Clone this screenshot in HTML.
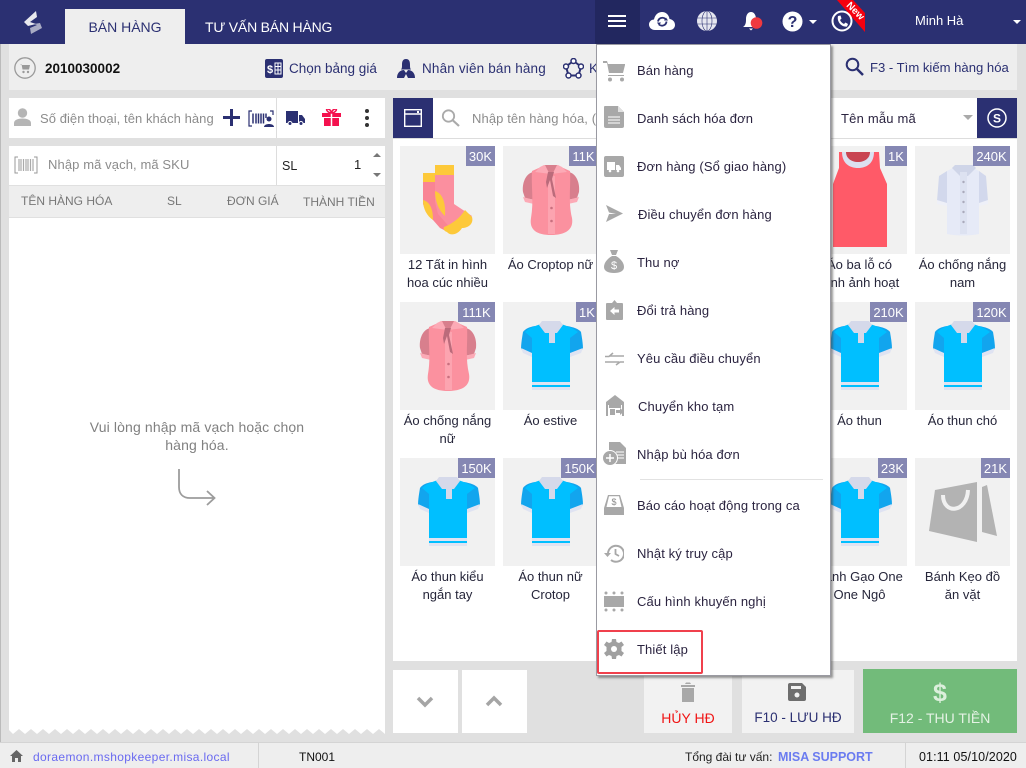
<!DOCTYPE html>
<html lang="vi"><head><meta charset="utf-8"><title>Bán hàng</title>
<style>
html,body{margin:0;padding:0;width:1026px;height:768px;overflow:hidden;background:#e0e0e0;font-family:"Liberation Sans","Noto Sans CJK SC",sans-serif;font-size:13px}
div,span,svg{position:absolute}
.t{white-space:nowrap;line-height:18px}
.w{background:#fff}
.cell{width:95px;height:108px;background:#f1f1f1;overflow:hidden}
.cell svg{left:0;top:0}
.b{top:0;right:0;height:20px;line-height:21px;background:#8587b3;color:#fff;font-size:13px;text-align:center}
.n{width:103px;text-align:center;color:#26263a;line-height:18px;font-size:13px}
.mi{left:637px;color:#2b2440;line-height:18px;white-space:nowrap;font-size:13px;letter-spacing:.12px;margin-top:1px}
.nv{color:#2b3072;font-weight:400}
.hd{color:#777;font-size:12px;top:193px;line-height:16px;white-space:nowrap}
</style></head><body>
<svg width="0" height="0" style="left:0;top:0">
<defs>
<g id="polo">
<path d="M32 24C26 25 22 27 20 30 19 36 18 42 18 47L29 52z" fill="#12a5ee"/><path d="M64 24C70 25 76 27 78 30 79 36 80 42 80 47L67 52z" fill="#12a5ee"/>
<path d="M18 46L29 51V55L20 51z" fill="#dfe3f2"/><path d="M80 46L67 51V55L78 51z" fill="#dfe3f2"/>
<rect x="29" y="27" width="38" height="58" fill="#00bfff"/><path d="M22 30C26 26 32 24 38 22H58C64 24 70 26 75 30L67 36H29z" fill="#00bfff"/>
<rect x="29" y="80" width="38" height="3" fill="#dfe3f2"/><rect x="29" y="85" width="38" height="3" fill="#dfe3f2"/>
<path d="M36 23L39 19H57L60 23 54 31H52V41H46V31H42z" fill="#d5d9ea"/>
</g>
<g id="blouse">
<path d="M30 26C22 28 19 38 20 46L22 52 32 54zM66 26C74 28 77 38 76 46L74 52 64 54z" fill="#d87f8d"/>
<path d="M20 51L31 54V58L22 56zM76 51L65 54V58L74 56z" fill="#fcaab6"/>
<path d="M29 25L38 21H58L67 25C68 40 65 55 69 72 71 84 62 89 48 89 34 89 26 84 28 72 31 55 28 40 29 25z" fill="#fb919f"/>
<rect x="45" y="30" width="7" height="58" fill="#fca4b0"/>
<path d="M37 21L41 19H55L59 21 64 26 48 28 32 26z" fill="#fcaab6"/>
<path d="M42 19H54L50 27H46z" fill="#d87f8d"/><path d="M45 26H51L49 33 53 52 50 50 47 34 44 42 43 36z" fill="#bb6b7b"/>
<circle cx="48.500" cy="62" r="1.300" fill="#c9707f"/><circle cx="48.500" cy="75" r="1.300" fill="#c9707f"/>
</g>
</defs></svg>

<!-- header -->
<div style="left:0;top:0;width:1026px;height:44px;background:#2b3072"></div>
<div style="left:0;top:44px;width:1px;height:724px;background:#bbb"></div>
<svg style="left:22px;top:9px" width="22" height="25" viewBox="0 0 22 25"><path d="M3 12L12 15 18 14 20 19 9 25 8 19 15 16z" fill="#a9abc4"/><path d="M2 13L14 2 15 8 8 13 14 15 6 17z" fill="#e8e8ee"/></svg>
<div style="left:65px;top:9px;width:120px;height:35px;background:#eee;color:#2b3072;text-align:center;line-height:37px;font-size:14px">BÁN HÀNG</div>
<div class="t" style="left:205px;top:18px;color:#fff;font-size:14px;letter-spacing:-.2px">TƯ VẤN BÁN HÀNG</div>
<div style="left:595px;top:0;width:45px;height:44px;background:#22275f"></div>
<div style="left:608px;top:15px;width:18px;height:2px;background:#fff"></div>
<div style="left:608px;top:20px;width:18px;height:2px;background:#fff"></div>
<div style="left:608px;top:25px;width:18px;height:2px;background:#fff"></div>
<svg style="left:649px;top:11px" width="26" height="20" viewBox="0 0 26 20"><path d="M6 19C2 19 0 16 0 13.500 0 10.500 2.500 8.500 5 8.500 6 3.500 9.500 1 13 1 17 1 20 4 20.500 8 24 8.500 26 11 26 14 26 17 23.500 19 21 19z" fill="#fff"/><path d="M9 10.500a4.500 4.500 0 0 1 7.500-2.500M17.500 10.500a4.500 4.500 0 0 1-7.500 3" fill="none" stroke="#2b3072" stroke-width="1.800"/><path d="M15 9.500h4l-2-3zM8 11.500h4l-2 3z" fill="#2b3072"/></svg>
<svg style="left:697px;top:11px" width="20" height="20" viewBox="0 0 20 20"><circle cx="10" cy="10" r="10" fill="#e6e7f0"/><path d="M0 7H20M0 13H20M10 0V20" stroke="#2b3072" stroke-width=".6"/><ellipse cx="10" cy="10" rx="5" ry="10" fill="none" stroke="#2b3072" stroke-width=".6"/></svg>
<svg style="left:743px;top:10px" width="22" height="22" viewBox="0 0 22 22"><path d="M0 17C3 15 3 12 3 9 3 5 5 2 8 2 11 2 13 5 13 9 13 12 15 15 16 17z" fill="#fff"/><path d="M6 18.500H10L8 20.500z" fill="#fff"/><circle cx="13.500" cy="13" r="5.800" fill="#f0393f"/></svg>
<svg style="left:782px;top:11px" width="21" height="21" viewBox="0 0 21 21"><circle cx="10.500" cy="10.500" r="10" fill="#fff"/><text x="10.500" y="16" text-anchor="middle" font-family="Liberation Sans" font-weight="700" font-size="16" fill="#2b3072">?</text></svg>
<div style="left:809px;top:20px;border:4px solid transparent;border-top-color:#fff;border-bottom:0"></div>
<svg style="left:837px;top:0" width="30" height="33" viewBox="0 0 30 33"><path d="M0 0H16L28 13V32z" fill="#f5000f"/><text text-anchor="middle" transform="translate(16.200 13.200) rotate(45)" font-family="Liberation Sans" font-weight="700" font-size="10" fill="#fff">New</text></svg>
<svg style="left:831px;top:10px" width="22" height="22" viewBox="0 0 22 22"><circle cx="11" cy="11" r="9.500" fill="none" stroke="#fff" stroke-width="2"/><path d="M7 6L9.500 5.500 10.500 8.500 9 10C10 12 11 13 13 14L14.500 12.500 17 14 16 16.500C11 17.500 5.500 12 7 6z" fill="#fff"/></svg>
<div class="t" style="left:915px;top:12px;color:#fff;font-size:13px">Minh Hà</div>
<div style="left:1013px;top:20px;border:4px solid transparent;border-top-color:#fff;border-bottom:0"></div>

<!-- toolbar -->
<div style="left:9px;top:44px;width:1008px;height:46px;background:#eee"></div>
<svg style="left:14px;top:57px" width="22" height="22" viewBox="0 0 22 22"><circle cx="11" cy="11" r="10.200" fill="none" stroke="#9a9a9a" stroke-width="1.300"/><path d="M6 7H7.500L8.500 12.500H15L16 8H8" fill="#9a9a9a"/><circle cx="9.500" cy="15" r="1.200" fill="#9a9a9a"/><circle cx="14" cy="15" r="1.200" fill="#9a9a9a"/></svg>
<div class="t" style="left:45px;top:60px;font-weight:700;color:#111;font-size:13.500px">2010030002</div>
<svg style="left:265px;top:59px" width="18" height="19" viewBox="0 0 18 19"><rect width="18" height="19" rx="2" fill="#2b3072"/><text x="2" y="14" font-family="Liberation Sans" font-weight="700" font-size="11" fill="#fff">$</text><path d="M10 4H16V15H10zM10 7.500H16M10 11H16M13 4V15" stroke="#fff" fill="none"/></svg>
<div class="t nv" style="left:289px;top:60px;font-size:13.500px">Chọn bảng giá</div>
<svg style="left:397px;top:58px" width="18" height="20" viewBox="0 0 18 20"><path d="M9 1C5.500 1 5 4 5 7 5 9 5 10.500 4 11.500H14C13 10.500 13 9 13 7 13 4 12.500 1 9 1z" fill="#2b3072"/><path d="M0 20C0 14 4 12 7 12L9 15 11 12C14 12 18 14 18 20H11L9 16 7 20z" fill="#2b3072"/></svg>
<div class="t nv" style="left:422px;top:60px;font-size:13.500px;letter-spacing:.17px">Nhân viên bán hàng</div>
<svg style="left:563px;top:58px" width="21" height="21" viewBox="0 0 21 21"><path d="M10.500 3L18 8.500 15.500 17.500H5.500L3 8.500z" fill="none" stroke="#2b3072" stroke-width="2"/><circle cx="10.500" cy="3" r="2.500" fill="#fff" stroke="#2b3072" stroke-width="1.500"/><circle cx="18" cy="8.500" r="2.500" fill="#fff" stroke="#2b3072" stroke-width="1.500"/><circle cx="3" cy="8.500" r="2.500" fill="#fff" stroke="#2b3072" stroke-width="1.500"/><circle cx="15.500" cy="17.500" r="2.500" fill="#fff" stroke="#2b3072" stroke-width="1.500"/><circle cx="5.500" cy="17.500" r="2.500" fill="#fff" stroke="#2b3072" stroke-width="1.500"/></svg>
<div class="t nv" style="left:589px;top:60px;font-size:13.500px">K</div>
<svg style="left:845px;top:57px" width="19" height="19" viewBox="0 0 19 19"><circle cx="7.500" cy="7.500" r="5.800" fill="none" stroke="#2b3072" stroke-width="2"/><path d="M12 12L18 18" stroke="#2b3072" stroke-width="2.500"/></svg>
<div class="t nv" style="left:870px;top:59px;font-size:13.100px">F3 - Tìm kiếm hàng hóa</div>

<!-- left column -->
<div class="w" style="left:9px;top:98px;width:376px;height:40px"></div>
<svg style="left:14px;top:108px" width="17" height="18" viewBox="0 0 17 18"><circle cx="8.500" cy="5" r="4.700" fill="#b5b5b5"/><path d="M0 18V15C0 12 4 10.500 8.500 10.500 13 10.500 17 12 17 15V18z" fill="#b5b5b5"/></svg>
<div class="t" style="left:40px;top:110px;color:#8c8c8c;font-size:13px;letter-spacing:.06px">Số điện thoại, tên khách hàng</div>
<div style="left:223px;top:116px;width:17px;height:3px;background:#2b3072"></div>
<div style="left:230px;top:109px;width:3px;height:17px;background:#2b3072"></div>
<svg style="left:248px;top:110px" width="26" height="17" viewBox="0 0 26 17"><path d="M4 1H1V16H4M22 1H25V5" fill="none" stroke="#2b3072" stroke-width="1.200"/><path d="M5 3.500V13.500M8 3.500V13.500M10.500 3.500V13.500M13 3.500V13.500M15.500 3.500V13.500M18 3.500V8" stroke="#2b3072" stroke-width="1.500"/><circle cx="21" cy="9" r="2.500" fill="#2b3072"/><path d="M16 17C16 13 26 13 26 17z" fill="#2b3072"/></svg>
<div style="left:276px;top:98px;width:1px;height:40px;background:#ddd"></div>
<svg style="left:286px;top:111px" width="19" height="15" viewBox="0 0 19 15"><path d="M0 0H12V12H0zM13 4H16L19 8V12H13z" fill="#2b3072"/><circle cx="4" cy="12.500" r="2" fill="#2b3072" stroke="#fff"/><circle cx="15" cy="12.500" r="2" fill="#2b3072" stroke="#fff"/></svg>
<svg style="left:322px;top:109px" width="19" height="17" viewBox="0 0 19 17"><path d="M0 4H19V8H0zM2 9H17V17H2z" fill="#f4114e"/><path d="M9.500 3V17" stroke="#fff" stroke-width="1.500"/><path d="M9.500 4C6 4 3 0 5.500 0S9 2 9.500 4C10 2 11 0 13.500 0S13 4 9.500 4z" fill="none" stroke="#f4114e" stroke-width="1.500"/></svg>
<div style="left:365px;top:109px;width:4px;height:4px;border-radius:50%;background:#333"></div>
<div style="left:365px;top:116px;width:4px;height:4px;border-radius:50%;background:#333"></div>
<div style="left:365px;top:123px;width:4px;height:4px;border-radius:50%;background:#333"></div>

<div class="w" style="left:9px;top:146px;width:376px;height:39px"></div>
<svg style="left:14px;top:156px" width="24" height="18" viewBox="0 0 24 18"><path d="M4 1H1V17H4M20 1H23V17H20" fill="none" stroke="#999" stroke-width="1"/><path d="M5 3V15M7 3V15M9.500 3V15M12 3V15M14 3V15M16.500 3V15M19 3V15" stroke="#aaa" stroke-width="1.200"/></svg>
<div class="t" style="left:48px;top:156px;color:#8c8c8c;font-size:13px;letter-spacing:.1px">Nhập mã vạch, mã SKU</div>
<div style="left:276px;top:146px;width:1px;height:39px;background:#ddd"></div>
<div class="t" style="left:282px;top:157px;color:#222;font-size:12.500px">SL</div>
<div class="t" style="left:354px;top:156px;color:#222;font-size:13px">1</div>
<div style="left:373px;top:153px;border:4px solid transparent;border-bottom-color:#777;border-top:0"></div>
<div style="left:373px;top:173px;border:4px solid transparent;border-top-color:#777;border-bottom:0"></div>
<div style="left:9px;top:186px;width:376px;height:31px;background:#eee"></div>
<div class="hd" style="left:21px">TÊN HÀNG HÓA</div>
<div class="hd" style="left:167px">SL</div>
<div class="hd" style="left:227px">ĐƠN GIÁ</div>
<div class="hd" style="left:303px;top:194px">THÀNH TIỀN</div>
<div class="w" style="left:9px;top:218px;width:376px;height:511px"></div>
<svg style="left:9px;top:729px" width="376" height="6" viewBox="0 0 376 6"><path d="M0 0H376V5L370 0 364 5 358 0 352 5 346 0 340 5 334 0 328 5 322 0 316 5 310 0 304 5 298 0 292 5 286 0 280 5 274 0 268 5 262 0 256 5 250 0 244 5 238 0 232 5 226 0 220 5 214 0 208 5 202 0 196 5 190 0 184 5 178 0 172 5 166 0 160 5 154 0 148 5 142 0 136 5 130 0 124 5 118 0 112 5 106 0 100 5 94 0 88 5 82 0 76 5 70 0 64 5 58 0 52 5 46 0 40 5 34 0 28 5 22 0 16 5 10 0 4 5 0 1z" fill="#fff"/></svg>
<div style="left:9px;top:418px;width:376px;text-align:center;color:#808080;font-size:14px;line-height:18px;letter-spacing:.13px">Vui lòng nhập mã vạch hoặc chọn<br>hàng hóa.</div>
<svg style="left:176px;top:468px" width="42" height="40" viewBox="0 0 42 40"><path d="M3 1V19C3 26 7 30 14 30H38M31 23L38.500 30 31 37" fill="none" stroke="#9c9c9c" stroke-width="1.800"/></svg>

<!-- right column -->
<div class="w" style="left:393px;top:98px;width:624px;height:563px"></div>
<div style="left:393px;top:138px;width:624px;height:1px;background:#ddd"></div>
<div style="left:393px;top:98px;width:40px;height:40px;background:#2b3072"></div>
<svg style="left:404px;top:109px" width="18" height="18" viewBox="0 0 18 18"><rect x=".7" y=".7" width="16.600" height="16.600" fill="none" stroke="#fff" stroke-width="1.400"/><path d="M1 5H17" stroke="#fff" stroke-width="1.500"/><rect x="13" y="2" width="2" height="2" fill="#fff"/></svg>
<svg style="left:441px;top:109px" width="19" height="18" viewBox="0 0 19 18"><circle cx="7.500" cy="7" r="5.700" fill="none" stroke="#aaa" stroke-width="1.800"/><path d="M12 11.500L18 17" stroke="#aaa" stroke-width="2.200"/></svg>
<div class="t" style="left:472px;top:110px;color:#8c8c8c;font-size:13px;letter-spacing:.1px">Nhập tên hàng hóa, (</div>
<div class="t" style="left:841px;top:110px;color:#2b2440;font-size:13px;letter-spacing:.2px">Tên mẫu mã</div>
<div style="left:963px;top:115px;border:5px solid transparent;border-top-color:#aaa;border-bottom:0"></div>
<div style="left:977px;top:98px;width:40px;height:40px;background:#2b3072"></div>
<svg style="left:987px;top:108px" width="20" height="20" viewBox="0 0 20 20"><circle cx="10" cy="10" r="9" fill="none" stroke="#fff" stroke-width="1.500"/><text x="10" y="14.500" text-anchor="middle" font-family="Liberation Sans" font-weight="700" font-size="12" fill="#fff">S</text></svg>

<!-- products row 1 -->
<div class="cell" style="left:400px;top:146px"><svg width="95" height="108" viewBox="0 0 95 108">
<path d="M23 36H36V60L55 80 50 87 40 82 26 66 23 58z" fill="#f98494"/><path d="M23 27H35V36H23z" fill="#fdc93a"/><path d="M23 54C30 56 33 63 33 74 27 70 23 63 23 54z" fill="#fdc93a"/>
<path d="M35 19H54V29H35z" fill="#fdc93a"/><path d="M35 29H54V58L72 70 58 86 52 84 38 68 35 56z" fill="#fb8f9f"/>
<path d="M35 45C42 47 46 56 45 70 38 64 35 54 35 45z" fill="#fdc93a"/><path d="M65 64L72 71C74 78 68 82 62 82 58 89 50 90 47 86 44 85 43 83 44 81 52 78 60 72 65 64z" fill="#fdc93a"/></svg><div class="b" style="width:29px">30K</div></div>
<div class="n" style="left:396px;top:256px">12 Tất in hình<br>hoa cúc nhiều</div>
<div class="cell" style="left:503px;top:146px"><svg width="95" height="108" viewBox="0 0 95 108"><use href="#blouse"/></svg><div class="b" style="width:29px">11K</div></div>
<div class="n" style="left:499px;top:256px">Áo Croptop nữ</div>
<div class="cell" style="left:812px;top:146px"><svg width="95" height="108" viewBox="0 0 95 108"><path d="M27 6H67L68 22 75 38V101H21V38L27 22z" fill="#ff5a68"/><path d="M30 6H62C62 17 55 22 46 22 37 22 30 17 30 6z" fill="#dce0f0"/><path d="M34 6H58C58 12 53 16 46 16 39 16 34 12 34 6z" fill="#c94451"/></svg><div class="b" style="width:22px">1K</div></div>
<div class="n" style="left:808px;top:256px">Áo ba lỗ có<br>hình ảnh hoạt</div>
<div class="cell" style="left:915px;top:146px"><svg width="95" height="108" viewBox="0 0 95 108"><path d="M32 25L24 30 22 55 32 58zM64 25L71 30 73 55 64 58z" fill="#d2d8ec"/><path d="M22 54L32 57V60L22 58zM73 54L64 57V60L73 58z" fill="#eef0f8"/><path d="M32 25L38 22H58L64 25V88C55 90 41 90 32 88z" fill="#e6eaf7"/><path d="M37 22L40 19H58L61 22 53 30H45z" fill="#cfd5e8"/><rect x="45" y="26" width="7" height="62" fill="#dde2f1"/><circle cx="48.500" cy="36" r="1.200" fill="#aab"/><circle cx="48.500" cy="46" r="1.200" fill="#aab"/><circle cx="48.500" cy="56" r="1.200" fill="#aab"/><circle cx="48.500" cy="66" r="1.200" fill="#aab"/><circle cx="48.500" cy="76" r="1.200" fill="#aab"/></svg><div class="b" style="width:37px">240K</div></div>
<div class="n" style="left:911px;top:256px">Áo chống nắng<br>nam</div>

<!-- row 2 -->
<div class="cell" style="left:400px;top:302px"><svg width="95" height="108" viewBox="0 0 95 108"><use href="#blouse"/></svg><div class="b" style="width:37px">111K</div></div>
<div class="n" style="left:396px;top:412px">Áo chống nắng<br>nữ</div>
<div class="cell" style="left:503px;top:302px"><svg width="95" height="108" viewBox="0 0 95 108"><use href="#polo"/></svg><div class="b" style="width:22px">1K</div></div>
<div class="n" style="left:499px;top:412px">Áo estive</div>
<div class="cell" style="left:812px;top:302px"><svg width="95" height="108" viewBox="0 0 95 108"><use href="#polo"/></svg><div class="b" style="width:37px">210K</div></div>
<div class="n" style="left:808px;top:412px">Áo thun</div>
<div class="cell" style="left:915px;top:302px"><svg width="95" height="108" viewBox="0 0 95 108"><use href="#polo"/></svg><div class="b" style="width:37px">120K</div></div>
<div class="n" style="left:911px;top:412px">Áo thun chó</div>

<!-- row 3 -->
<div class="cell" style="left:400px;top:458px"><svg width="95" height="108" viewBox="0 0 95 108"><use href="#polo"/></svg><div class="b" style="width:37px">150K</div></div>
<div class="n" style="left:396px;top:568px">Áo thun kiểu<br>ngắn tay</div>
<div class="cell" style="left:503px;top:458px"><svg width="95" height="108" viewBox="0 0 95 108"><use href="#polo"/></svg><div class="b" style="width:37px">150K</div></div>
<div class="n" style="left:499px;top:568px">Áo thun nữ<br>Crotop</div>
<div class="cell" style="left:812px;top:458px"><svg width="95" height="108" viewBox="0 0 95 108"><use href="#polo"/></svg><div class="b" style="width:29px">23K</div></div>
<div class="n" style="left:808px;top:568px">Bánh Gạo One<br>One Ngô</div>
<div class="cell" style="left:915px;top:458px"><svg width="95" height="108" viewBox="0 0 95 108"><path d="M20 32L62 24 62 84 14 73z" fill="#b3b3b3"/><path d="M67 29L72 27 82 78 67 74z" fill="#b3b3b3"/><path d="M28 37C28 57 52 55 53 32" fill="none" stroke="#f1f1f1" stroke-width="4"/></svg><div class="b" style="width:29px">21K</div></div>
<div class="n" style="left:911px;top:568px">Bánh Kẹo đồ<br>ăn vặt</div>

<!-- bottom buttons -->
<div class="w" style="left:393px;top:670px;width:65px;height:63px"></div>
<div class="w" style="left:462px;top:670px;width:65px;height:63px"></div>
<svg style="left:416px;top:696px" width="18" height="12" viewBox="0 0 18 12"><path d="M2 2L9 9 16 2" fill="none" stroke="#a5a5a5" stroke-width="3.500"/></svg>
<svg style="left:485px;top:695px" width="18" height="12" viewBox="0 0 18 12"><path d="M2 10L9 3 16 10" fill="none" stroke="#a5a5a5" stroke-width="3.500"/></svg>
<div style="left:644px;top:670px;width:88px;height:63px;background:#f2f2f2"></div>
<svg style="left:680px;top:682px" width="16" height="20" viewBox="0 0 16 20"><path d="M1 3H15V5H1zM5 2L6 0.500H10L11 2zM2 6H14V20H2z" fill="#a8a8a8"/></svg>
<div style="left:644px;top:709px;width:88px;text-align:center;color:#f01616;font-size:14px;line-height:18px">HỦY HĐ</div>
<div style="left:742px;top:670px;width:112px;height:63px;background:#f2f2f2"></div>
<svg style="left:788px;top:683px" width="18" height="18" viewBox="0 0 18 18"><path d="M0 2Q0 0 2 0H14L18 4V16Q18 18 16 18H2Q0 18 0 16z" fill="#6e6e6e"/><rect x="3" y="3" width="10" height="3" fill="#f2f2f2"/><circle cx="9" cy="12" r="2.500" fill="#f2f2f2"/></svg>
<div style="left:742px;top:709px;width:112px;text-align:center;color:#2b3072;font-size:13.500px;line-height:18px">F10 - LƯU HĐ</div>
<div style="left:863px;top:669px;width:154px;height:64px;background:#72bb7a"></div>
<div style="left:863px;top:680px;width:154px;text-align:center;color:#dcefdc;font-size:25px;font-weight:700;line-height:26px">$</div>
<div style="left:863px;top:709px;width:154px;text-align:center;color:#e4f2e4;font-size:14px;line-height:18px">F12 - THU TIỀN</div>

<!-- status -->
<div style="left:0;top:742px;width:1026px;height:25px;background:#eee;border-top:1px solid #d4d4d4"></div>
<svg style="left:10px;top:750px" width="13" height="12" viewBox="0 0 13 12"><path d="M6.500 0L13 6H11V12H8V8H5V12H2V6H0z" fill="#666"/></svg>
<div class="t" style="left:33px;top:748px;color:#6a6af0;font-size:12px;letter-spacing:.35px">doraemon.mshopkeeper.misa.local</div>
<div style="left:258px;top:743px;width:1px;height:25px;background:#d4d4d4"></div>
<div class="t" style="left:299px;top:748px;color:#111;font-size:12px">TN001</div>
<div class="t" style="left:685px;top:748px;color:#222;font-size:12px">Tổng đài tư vấn:</div>
<div class="t" style="left:778px;top:748px;color:#6b7cf0;font-size:12.500px;font-weight:700">MISA SUPPORT</div>
<div style="left:905px;top:743px;width:1px;height:25px;background:#d4d4d4"></div>
<div class="t" style="left:919px;top:748px;color:#111;font-size:12.500px;letter-spacing:.1px">01:11 05/10/2020</div>

<!-- menu -->
<div style="left:596px;top:44px;width:233px;height:630px;background:#fff;border:1px solid #9a9aa2;box-shadow:2px 2px 2px rgba(70,70,70,.55)"></div>
<svg style="left:603px;top:60px" width="24" height="22" viewBox="0 0 24 22"><path d="M0 1H4L5 4H22V5L20 13H6L4 3H0z" fill="#a8a8a8"/><path d="M5 15H21V16H5z" fill="#a8a8a8"/><circle cx="7" cy="19.500" r="2" fill="#a8a8a8"/><circle cx="19" cy="19.500" r="2" fill="#a8a8a8"/></svg>
<div class="mi" style="top:61px">Bán hàng</div>
<svg style="left:604px;top:106px" width="20" height="22" viewBox="0 0 20 22"><path d="M1 0H14L20 6V20Q20 22 18 22H2Q0 22 0 20V1Q0 0 1 0z" fill="#a8a8a8"/><path d="M14 0V6H20z" fill="#e0e0e0"/><path d="M4 11H16M4 14H16M4 17H16" stroke="#fff"/></svg>
<div class="mi" style="top:109px">Danh sách hóa đơn</div>
<svg style="left:604px;top:156px" width="20" height="21" viewBox="0 0 20 21"><rect width="20" height="21" rx="2" fill="#a8a8a8"/><path d="M3 6H11V14H3zM12 9H15L17 12V14H12z" fill="#fff"/><circle cx="6" cy="15" r="1.300" fill="#fff"/><circle cx="14" cy="15" r="1.300" fill="#fff"/></svg>
<div class="mi" style="top:157px">Đơn hàng (Sổ giao hàng)</div>
<svg style="left:606px;top:205px" width="17" height="17" viewBox="0 0 17 17"><path d="M0 0L17 8.500 0 17 3 9H10L3 7.500z" fill="#a8a8a8"/></svg>
<div class="mi" style="top:205px;left:638px">Điều chuyển đơn hàng</div>
<svg style="left:604px;top:250px" width="20" height="23" viewBox="0 0 20 23"><path d="M6 0H14L12 5H8z" fill="#a8a8a8"/><path d="M8 6H12C17 9 20 13 20 17 20 21 16 23 10 23 4 23 0 21 0 17 0 13 3 9 8 6z" fill="#a8a8a8"/><text x="10" y="19" text-anchor="middle" font-family="Liberation Sans" font-size="11" fill="#fff">$</text></svg>
<div class="mi" style="top:253px">Thu nợ</div>
<svg style="left:606px;top:300px" width="17" height="20" viewBox="0 0 17 20"><path d="M1 3H6L8.500 0 11 3H16Q17 3 17 4V19Q17 20 16 20H1Q0 20 0 19V4Q0 3 1 3z" fill="#a8a8a8"/><path d="M4 11L8.500 7V9.500H13V12.500H8.500V15z" fill="#fff"/></svg>
<div class="mi" style="top:301px">Đổi trả hàng</div>
<svg style="left:605px;top:352px" width="19" height="15" viewBox="0 0 19 15"><path d="M19 4H5M8 1L4 4.500H0M0 10H14M11 13L15 10H19" fill="none" stroke="#a8a8a8" stroke-width="1.500"/></svg>
<div class="mi" style="top:349px">Yêu cầu điều chuyển</div>
<svg style="left:606px;top:395px" width="18" height="21" viewBox="0 0 18 21"><path d="M0 7L9 0 18 7V21H16V10H2V21H0z" fill="#a8a8a8"/><path d="M3 9H15V13H3z" fill="#a8a8a8"/><path d="M4 14H9V20H4z" fill="#a8a8a8"/><path d="M10 15H14V13L18 16.500 14 20V18H10z" fill="#a8a8a8"/></svg>
<div class="mi" style="top:397px;left:638px">Chuyển kho tạm</div>
<svg style="left:602px;top:442px" width="24" height="24" viewBox="0 0 24 24"><path d="M7 0H18L24 6V22H10V14H7z" fill="#a8a8a8"/><path d="M14 10H22M14 13H22M14 16H22" stroke="#fff"/><circle cx="8" cy="16" r="7.500" fill="#a8a8a8" stroke="#fff"/><path d="M8 12V20M4 16H12" stroke="#fff" stroke-width="1.500"/></svg>
<div class="mi" style="top:445px">Nhập bù hóa đơn</div>
<div style="left:640px;top:479px;width:183px;height:1px;background:#e2e2e2"></div>
<svg style="left:604px;top:495px" width="20" height="20" viewBox="0 0 20 20"><path d="M4 0H16L20 13V20H0V13z" fill="#a8a8a8"/><path d="M5 1.200H15L17.500 12H2.500z" fill="#fff"/><text x="10" y="10" text-anchor="middle" font-family="Liberation Sans" font-size="9" fill="#888">$</text></svg>
<div class="mi" style="top:496px">Báo cáo hoạt động trong ca</div>
<svg style="left:604px;top:544px" width="20" height="19" viewBox="0 0 20 19"><path d="M4 9.500A8 8 0 1 1 7 16" fill="none" stroke="#a8a8a8" stroke-width="2"/><path d="M0 9H7L3.500 13z" fill="#a8a8a8"/><path d="M11.500 5V10L15 12" fill="none" stroke="#a8a8a8" stroke-width="1.800"/></svg>
<div class="mi" style="top:544px">Nhật ký truy cập</div>
<svg style="left:604px;top:591px" width="20" height="21" viewBox="0 0 20 21"><rect y="5" width="20" height="11" fill="#a8a8a8"/><g fill="#a8a8a8"><circle cx="2" cy="2" r="1.500"/><circle cx="10" cy="2" r="1.500"/><circle cx="18" cy="2" r="1.500"/><circle cx="2" cy="19" r="1.500"/><circle cx="10" cy="19" r="1.500"/><circle cx="18" cy="19" r="1.500"/></g></svg>
<div class="mi" style="top:592px">Cấu hình khuyến nghị</div>
<svg style="left:604px;top:639px" width="20" height="20" viewBox="0 0 20 20"><path d="M8 0H12L12.500 3 15 4 17.500 2.500 20 6 17.500 8 17.500 12 20 14 17.500 17.500 15 16 12.500 17 12 20H8L7.500 17 5 16 2.500 17.500 0 14 2.500 12V8L0 6 2.500 2.500 5 4 7.500 3z" fill="#a0a0a0"/><circle cx="10" cy="10" r="3" fill="#fff"/></svg>
<div class="mi" style="top:640px">Thiết lập</div>
<div style="left:597px;top:630px;width:102px;height:40px;border:2px solid #f0404c;border-radius:2px"></div>
</body></html>
